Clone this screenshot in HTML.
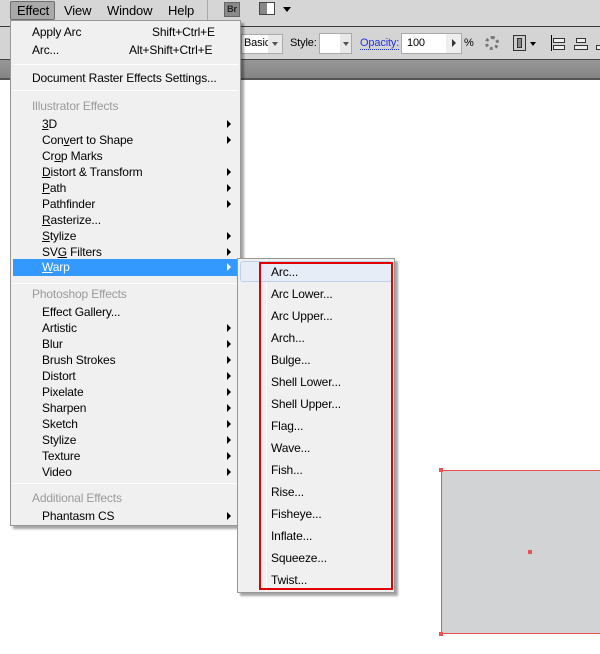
<!DOCTYPE html>
<html><head><style>
*{margin:0;padding:0;box-sizing:border-box}
body{width:600px;height:654px;position:relative;overflow:hidden;background:#fff;font-family:"Liberation Sans","DejaVu Sans",sans-serif;font-size:12px;color:#000;letter-spacing:-0.15px}
.a{position:absolute;white-space:nowrap}
.it{position:absolute;left:42px;line-height:18px}
.hd{position:absolute;left:32px;color:#9a9a9a;line-height:18px}
.ar{position:absolute;left:227px;width:0;height:0;border-left:4px solid #000;border-top:4px solid transparent;border-bottom:4px solid transparent}
.sep{position:absolute;left:13px;width:225px;height:1px;background:#b5b5b5;border-bottom:1px solid #fff}
.si{position:absolute;left:271px;line-height:18px}
u{text-decoration:underline}
</style></head><body>
<div class="a" style="left:0;top:0;width:600px;height:27px;background:#d6d6d6"></div>
<div class="a" style="left:10px;top:1px;width:45px;height:19px;background:#a9a9a9;border:1px solid #6e6e6e;border-radius:2px"></div>
<div class="a" style="left:17px;top:3px;font-size:13px">Effect</div>
<div class="a" style="left:64px;top:3px;font-size:13px">View</div>
<div class="a" style="left:107px;top:3px;font-size:13px">Window</div>
<div class="a" style="left:168px;top:3px;font-size:13px">Help</div>
<div class="a" style="left:207px;top:0;width:1px;height:20px;background:#aaa"></div>
<div class="a" style="left:224px;top:2px;width:16px;height:15px;background:#8a8a8a;border:1px solid #666;color:#222;font-size:9px;font-weight:bold;text-align:center;line-height:13px">Br</div>
<div class="a" style="left:259px;top:2px;width:16px;height:13px;border:1px solid #444;background:linear-gradient(90deg,#888 50%,#fff 50%)"></div>
<div class="a" style="left:283px;top:7px;border-top:5px solid #000;border-left:4px solid transparent;border-right:4px solid transparent"></div>
<div class="a" style="left:0;top:26px;width:600px;height:1px;background:#3a3a3a"></div>
<div class="a" style="left:0;top:27px;width:600px;height:33px;background:#d4d4d4"></div>
<div class="a" style="left:0;top:59px;width:600px;height:1px;background:#444"></div>
<div class="a" style="left:0;top:60px;width:600px;height:18px;background:linear-gradient(#979797,#858585)"></div>
<div class="a" style="left:0;top:78px;width:600px;height:2px;background:#555"></div>
<div class="a" style="left:241px;top:34px;width:42px;height:20px;background:#fff;border:1px solid #aaa"></div>
<div class="a" style="left:244px;top:37px;font-size:11px">Basic</div>
<div class="a" style="left:268px;top:35px;width:14px;height:18px;background:#e8e8e8"></div>
<div class="a" style="left:272px;top:42px;border-top:4px solid #555;border-left:3px solid transparent;border-right:3px solid transparent"></div>
<div class="a" style="left:290px;top:37px;font-size:11px">Style:</div>
<div class="a" style="left:319px;top:33px;width:33px;height:21px;background:#fff;border:1px solid #aaa"></div>
<div class="a" style="left:340px;top:34px;width:11px;height:19px;background:#e8e8e8"></div>
<div class="a" style="left:343px;top:42px;border-top:4px solid #555;border-left:3px solid transparent;border-right:3px solid transparent"></div>
<div class="a" style="left:360px;top:37px;font-size:11px;color:#2233ee;border-bottom:1px dotted #2233ee;line-height:12px">Opacity:</div>
<div class="a" style="left:401px;top:33px;width:61px;height:21px;background:#fff;border:1px solid #aaa"></div>
<div class="a" style="left:407px;top:37px;font-size:11px">100</div>
<div class="a" style="left:446px;top:34px;width:15px;height:19px;background:#eee"></div>
<div class="a" style="left:452px;top:39px;border-left:4px solid #333;border-top:4px solid transparent;border-bottom:4px solid transparent"></div>
<div class="a" style="left:464px;top:37px;font-size:11px">%</div>
<div class="a" style="left:485px;top:36px;width:14px;height:14px;border-radius:50%;border:3px dotted #777"></div>
<div class="a" style="left:513px;top:35px;width:13px;height:16px;border:1px solid #333;background:#ccc"></div>
<div class="a" style="left:517px;top:38px;width:5px;height:10px;border:1px solid #333;background:#888"></div>
<div class="a" style="left:530px;top:42px;border-top:4px solid #000;border-left:3px solid transparent;border-right:3px solid transparent"></div>
<div class="a" style="left:551px;top:35px;width:1px;height:16px;background:#000"></div>
<div class="a" style="left:553px;top:38px;width:12px;height:5px;border:1px solid #333;background:#eee"></div>
<div class="a" style="left:553px;top:45px;width:12px;height:5px;border:1px solid #333;background:#eee"></div>
<div class="a" style="left:576px;top:38px;width:10px;height:5px;border:1px solid #333;background:#eee"></div>
<div class="a" style="left:574px;top:45px;width:14px;height:5px;border:1px solid #333;background:#eee"></div>
<div class="a" style="left:596px;top:45px;width:10px;height:5px;border:1px solid #333;background:#eee"></div>
<div class="a" style="left:441px;top:470px;width:170px;height:164px;background:#d2d3d5;border:1px solid #f05050"></div>
<div class="a" style="left:439px;top:468px;width:4px;height:4px;background:#f05050"></div>
<div class="a" style="left:439px;top:632px;width:4px;height:4px;background:#f05050"></div>
<div class="a" style="left:528px;top:550px;width:4px;height:4px;background:#f05050"></div>
<div class="a" style="left:10px;top:20px;width:231px;height:506px;background:#f0f0f0;border:1px solid #979797;box-shadow:3px 3px 2px rgba(0,0,0,.35)"></div>
<div class="a" style="left:32px;top:23px;line-height:18px">Apply Arc</div>
<div class="a" style="left:152px;top:23px;line-height:18px">Shift+Ctrl+E</div>
<div class="a" style="left:32px;top:41px;line-height:18px">Arc...</div>
<div class="a" style="left:129px;top:41px;line-height:18px">Alt+Shift+Ctrl+E</div>
<div class="sep" style="top:64px"></div>
<div class="a" style="left:32px;top:69px;line-height:18px">Document Raster Effects Settings...</div>
<div class="sep" style="top:90px"></div>
<div class="hd" style="top:97px">Illustrator Effects</div>
<div class="it" style="top:115px"><u>3</u>D</div><div class="ar" style="top:120px"></div>
<div class="it" style="top:131px">Con<u>v</u>ert to Shape</div><div class="ar" style="top:136px"></div>
<div class="it" style="top:147px">Cr<u>o</u>p Marks</div>
<div class="it" style="top:163px"><u>D</u>istort &amp; Transform</div><div class="ar" style="top:168px"></div>
<div class="it" style="top:179px"><u>P</u>ath</div><div class="ar" style="top:184px"></div>
<div class="it" style="top:195px">Pathfinder</div><div class="ar" style="top:200px"></div>
<div class="it" style="top:211px"><u>R</u>asterize...</div>
<div class="it" style="top:227px"><u>S</u>tylize</div><div class="ar" style="top:232px"></div>
<div class="it" style="top:243px">SV<u>G</u> Filters</div><div class="ar" style="top:248px"></div>
<div class="a" style="left:13px;top:259px;width:225px;height:17px;background:#3399ff"></div>
<div class="it" style="top:258px;color:#fff"><u>W</u>arp</div><div class="ar" style="top:263px;border-left-color:#fff"></div>
<div class="sep" style="top:283px"></div>
<div class="hd" style="top:285px">Photoshop Effects</div>
<div class="it" style="top:303px">Effect Gallery...</div>
<div class="it" style="top:319px">Artistic</div><div class="ar" style="top:324px"></div>
<div class="it" style="top:335px">Blur</div><div class="ar" style="top:340px"></div>
<div class="it" style="top:351px">Brush Strokes</div><div class="ar" style="top:356px"></div>
<div class="it" style="top:367px">Distort</div><div class="ar" style="top:372px"></div>
<div class="it" style="top:383px">Pixelate</div><div class="ar" style="top:388px"></div>
<div class="it" style="top:399px">Sharpen</div><div class="ar" style="top:404px"></div>
<div class="it" style="top:415px">Sketch</div><div class="ar" style="top:420px"></div>
<div class="it" style="top:431px">Stylize</div><div class="ar" style="top:436px"></div>
<div class="it" style="top:447px">Texture</div><div class="ar" style="top:452px"></div>
<div class="it" style="top:463px">Video</div><div class="ar" style="top:468px"></div>
<div class="sep" style="top:483px"></div>
<div class="hd" style="top:489px">Additional Effects</div>
<div class="it" style="top:507px">Phantasm CS</div><div class="ar" style="top:512px"></div>
<div class="a" style="left:237px;top:258px;width:158px;height:335px;background:#f0f0f0;border:1px solid #979797;box-shadow:3px 3px 2px rgba(0,0,0,.35)"></div>
<div class="a" style="left:266px;top:259px;width:1px;height:333px;background:#e2e3e3;border-right:1px solid #fff"></div>
<div class="a" style="left:240px;top:261px;width:152px;height:21px;background:#e6edf7;border:1px solid #bcd0ea;border-radius:3px"></div>
<div class="si" style="top:263px">Arc...</div>
<div class="si" style="top:285px">Arc Lower...</div>
<div class="si" style="top:307px">Arc Upper...</div>
<div class="si" style="top:329px">Arch...</div>
<div class="si" style="top:351px">Bulge...</div>
<div class="si" style="top:373px">Shell Lower...</div>
<div class="si" style="top:395px">Shell Upper...</div>
<div class="si" style="top:417px">Flag...</div>
<div class="si" style="top:439px">Wave...</div>
<div class="si" style="top:461px">Fish...</div>
<div class="si" style="top:483px">Rise...</div>
<div class="si" style="top:505px">Fisheye...</div>
<div class="si" style="top:527px">Inflate...</div>
<div class="si" style="top:549px">Squeeze...</div>
<div class="si" style="top:571px">Twist...</div>
<div class="a" style="left:259px;top:262px;width:134px;height:328px;border:2px solid #e00000"></div>
</body></html>
